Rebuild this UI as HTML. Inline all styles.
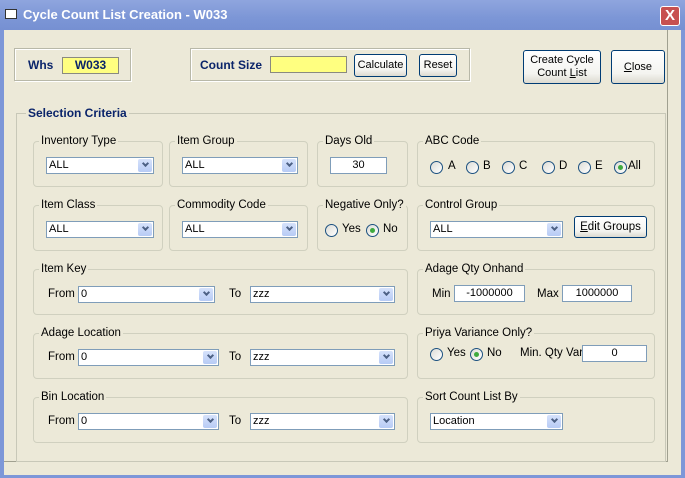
<!DOCTYPE html>
<html><head><style>
*{box-sizing:border-box}
body{margin:0;width:685px;height:478px;overflow:hidden;background:#7d97d8;font-family:"Liberation Sans",sans-serif;font-size:11px;color:#000}
.a{position:absolute}
#title{left:0;top:0;width:685px;height:30px;background:linear-gradient(#8fa5de,#7c96d6 60%,#7690d2)}
#body{left:4px;top:30px;width:677px;height:445px;background:#ECE9D8}
.grp{position:absolute;border:1px solid #d0d0bf;border-radius:4px}
.lbl{position:absolute;background:#ECE9D8;padding:0 2px;top:-8px;left:5px;line-height:14px;font-size:11.5px}
.box{position:absolute;border:1px solid #b8b8a8;box-shadow:inset 1px 1px 0 #fff,1px 1px 0 #fff}
.cb{position:absolute;height:17px;background:#fff;border:1px solid #7f9db9;padding-left:2px;line-height:15px;font-size:11px}
.cb:after{content:"";position:absolute;right:1px;top:1px;width:14px;height:13px;background:linear-gradient(#d6e2fb,#b7cbf5);border-radius:2px}
.cb i{position:absolute;right:5px;top:3px;width:5px;height:5px;border-right:2px solid #4d6185;border-bottom:2px solid #4d6185;transform:rotate(45deg);z-index:1}
.tb{position:absolute;height:17px;background:#fff;border:1px solid #7f9db9;text-align:center;line-height:15px;font-size:11px}
.btn{position:absolute;border:1px solid #003c74;border-radius:3px;background:linear-gradient(#fff,#f4f4f0 70%,#dcdad0);text-align:center;font-size:11px}
.rd{position:absolute;width:13px;height:13px;border:1px solid #1c5180;border-radius:50%;background:linear-gradient(135deg,#dcdcd6,#fff)}
.rd.on:after{content:"";position:absolute;left:3px;top:3px;width:5px;height:5px;border-radius:50%;background:#3eaa3e}
.t{position:absolute;font-size:11.5px;line-height:14px}
.nb{color:#0a246a;font-weight:bold;font-size:12px}
</style></head><body>
<div id="title" class="a">
 <div class="a" style="left:5px;top:9px;width:12px;height:10px;background:#fff;border:1px solid #333"></div>
 <div class="a" style="left:23px;top:7px;color:#fff;font-weight:bold;font-size:13px">Cycle Count List Creation - W033</div>
 <div class="a" style="left:660px;top:6px;width:20px;height:20px;background:#c75050;border:1px solid #fff;border-radius:3px;color:#fff;font-weight:bold;font-size:15px;text-align:center;line-height:18px">X</div>
</div>
<div id="body" class="a"></div>
<div class="a" style="left:667px;top:30px;width:1px;height:432px;background:#a0a090"></div>
<div class="a" style="left:4px;top:461px;width:664px;height:1px;background:#a0a090"></div>

<div class="box" style="left:14px;top:48px;width:117px;height:33px"></div>
<div class="t nb" style="left:28px;top:58px">Whs</div>
<div class="tb nb" style="left:62px;top:57px;width:57px;background:#ffff80;border-color:#8a8a80">W033</div>

<div class="box" style="left:190px;top:48px;width:280px;height:33px"></div>
<div class="t nb" style="left:200px;top:58px">Count Size</div>
<div class="tb" style="left:270px;top:56px;width:77px;background:#ffff80;border-color:#8a8a80"></div>
<div class="btn" style="left:354px;top:54px;width:53px;height:23px;line-height:21px">Calculate</div>
<div class="btn" style="left:419px;top:54px;width:38px;height:23px;line-height:21px">Reset</div>
<div class="btn" style="left:523px;top:50px;width:78px;height:34px;line-height:13px;padding-top:3px">Create Cycle<br>Count <u>L</u>ist</div>
<div class="btn" style="left:611px;top:50px;width:54px;height:34px;line-height:32px"><u>C</u>lose</div>

<div class="grp" style="left:16px;top:113px;width:650px;height:349px;border-radius:0;border-color:#c8c8b8"><div class="lbl nb" style="left:9px;top:-8px">Selection Criteria</div></div>

<div class="grp" style="left:33px;top:141px;width:130px;height:46px"><div class="lbl">Inventory Type</div></div>
<div class="cb" style="left:46px;top:157px;width:108px">ALL<i></i></div>
<div class="grp" style="left:169px;top:141px;width:139px;height:46px"><div class="lbl">Item Group</div></div>
<div class="cb" style="left:182px;top:157px;width:116px">ALL<i></i></div>
<div class="grp" style="left:317px;top:141px;width:91px;height:46px"><div class="lbl">Days Old</div></div>
<div class="tb" style="left:330px;top:157px;width:57px">30</div>
<div class="grp" style="left:417px;top:141px;width:238px;height:46px"><div class="lbl">ABC Code</div></div>
<div class="rd" style="left:430px;top:161px"></div><div class="t" style="left:448px;top:159px">A</div>
<div class="rd" style="left:466px;top:161px"></div><div class="t" style="left:483px;top:159px">B</div>
<div class="rd" style="left:502px;top:161px"></div><div class="t" style="left:519px;top:159px">C</div>
<div class="rd" style="left:542px;top:161px"></div><div class="t" style="left:559px;top:159px">D</div>
<div class="rd" style="left:578px;top:161px"></div><div class="t" style="left:595px;top:159px">E</div>
<div class="rd on" style="left:614px;top:161px"></div><div class="t" style="left:628px;top:159px">All</div>

<div class="grp" style="left:33px;top:205px;width:130px;height:46px"><div class="lbl">Item Class</div></div>
<div class="cb" style="left:46px;top:221px;width:108px">ALL<i></i></div>
<div class="grp" style="left:169px;top:205px;width:139px;height:46px"><div class="lbl">Commodity Code</div></div>
<div class="cb" style="left:182px;top:221px;width:116px">ALL<i></i></div>
<div class="grp" style="left:317px;top:205px;width:91px;height:46px"><div class="lbl">Negative Only?</div></div>
<div class="rd" style="left:325px;top:224px"></div><div class="t" style="left:342px;top:222px">Yes</div>
<div class="rd on" style="left:366px;top:224px"></div><div class="t" style="left:383px;top:222px">No</div>
<div class="grp" style="left:417px;top:205px;width:238px;height:46px"><div class="lbl">Control Group</div></div>
<div class="cb" style="left:430px;top:221px;width:133px">ALL<i></i></div>
<div class="btn" style="left:574px;top:216px;width:73px;height:22px;line-height:20px;font-size:11.5px"><u>E</u>dit Groups</div>

<div class="grp" style="left:33px;top:269px;width:375px;height:46px"><div class="lbl">Item Key</div></div>
<div class="t" style="left:48px;top:287px">From</div><div class="cb" style="left:78px;top:286px;width:137px">0<i></i></div>
<div class="t" style="left:229px;top:287px">To</div><div class="cb" style="left:250px;top:286px;width:145px">zzz<i></i></div>
<div class="grp" style="left:417px;top:269px;width:238px;height:46px"><div class="lbl">Adage Qty Onhand</div></div>
<div class="t" style="left:432px;top:287px">Min</div><div class="tb" style="left:454px;top:285px;width:71px">-1000000</div>
<div class="t" style="left:537px;top:287px">Max</div><div class="tb" style="left:562px;top:285px;width:70px">1000000</div>

<div class="grp" style="left:33px;top:333px;width:375px;height:46px"><div class="lbl">Adage Location</div></div>
<div class="t" style="left:48px;top:350px">From</div><div class="cb" style="left:78px;top:349px;width:141px">0<i></i></div>
<div class="t" style="left:229px;top:350px">To</div><div class="cb" style="left:250px;top:349px;width:145px">zzz<i></i></div>
<div class="grp" style="left:417px;top:333px;width:238px;height:46px"><div class="lbl">Priya Variance Only?</div></div>
<div class="rd" style="left:430px;top:348px"></div><div class="t" style="left:447px;top:346px">Yes</div>
<div class="rd on" style="left:470px;top:348px"></div><div class="t" style="left:487px;top:346px">No</div>
<div class="t" style="left:520px;top:346px">Min. Qty Var</div><div class="tb" style="left:582px;top:345px;width:65px">0</div>

<div class="grp" style="left:33px;top:397px;width:375px;height:46px"><div class="lbl">Bin Location</div></div>
<div class="t" style="left:48px;top:414px">From</div><div class="cb" style="left:78px;top:413px;width:141px">0<i></i></div>
<div class="t" style="left:229px;top:414px">To</div><div class="cb" style="left:250px;top:413px;width:145px">zzz<i></i></div>
<div class="grp" style="left:417px;top:397px;width:238px;height:46px"><div class="lbl">Sort Count List By</div></div>
<div class="cb" style="left:430px;top:413px;width:133px">Location<i></i></div>
</body></html>
